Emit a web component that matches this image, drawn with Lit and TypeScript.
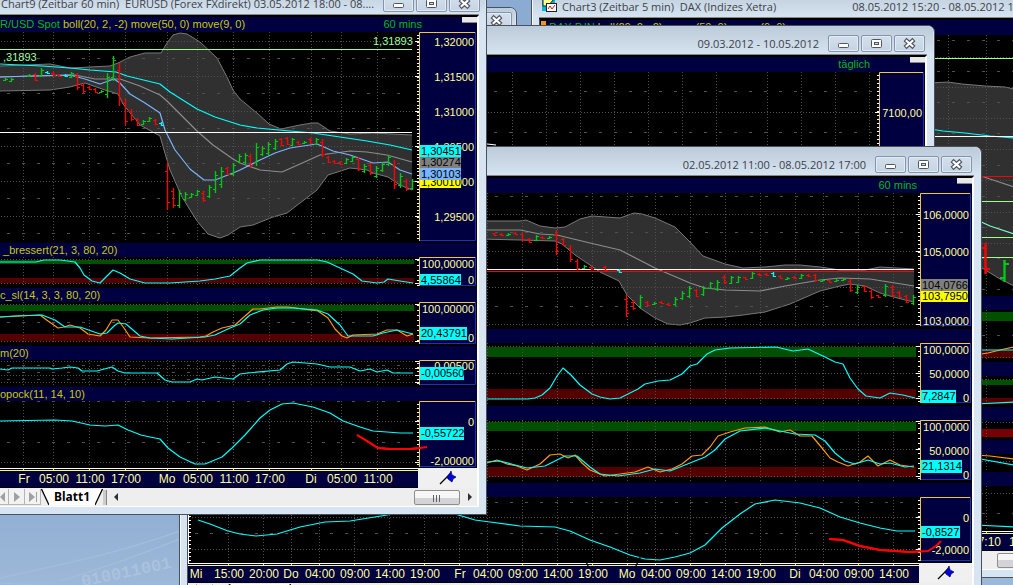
import { LitElement, html, svg, css } from "lit";
import { customElement, property } from "lit/decorators.js";

type Colour = string;
interface Line { pts: string; colour: Colour; width?: number; }
interface Label { text: string; y: number; }
interface Tag { text: string; y: number; h: number; bg: Colour; w: number; }
interface Pane {
  title?: { text: string; colour: Colour }[];
  marker?: boolean;
  note?: string;
  top: number;
  height: number;
  boxHeight: number;
  dotted: number[];
  dashed: number[];
  tick: number;
  bands?: [number, number, Colour][];
  cloud?: { upper: string; lower: string };
  lines: Line[];
  levels?: [number, Colour][];
  bars?: string;
  barWidth?: number;
  labels: Label[];
  tags?: Tag[];
  notes?: { text: string; x: number; y: number }[];
}
interface Frame {
  x0: number; x1: number; axis: number; axisEnd: number; plotEnd: number;
  grid: number[]; leftTicks?: boolean;
}

const GREEN = "#00b818";
const YELLOW = "#c8c80a";
const CYAN = "#00ffff";
const ORANGE = "#ff9a0a";
const BAND_GREEN = "#005000";
const BAND_RED = "#540000";
const BAR_COLOURS: Record<string, string> = { g: "#00c814", r: "#ff0000", c: "#00ffff" };

/** "x,high,low,kind" entries become open/close bars. */
const drawBars = (list: string, width = 1) =>
  list.trim().split(/\s+/).map((entry) => {
    const [xs, hs, ls, kind] = entry.split(",");
    const x = +xs, hi = +hs, lo = +ls;
    const inset = Math.round((lo - hi) / 6);
    const open = kind === "g" ? lo - inset : hi + inset;
    const close = kind === "g" ? hi + inset : lo - inset;
    const arm = width * 2 + 1;
    return svg`<path d="M${x + 0.5} ${hi}V${lo}" stroke=${BAR_COLOURS[kind]} stroke-width=${width + 0.4}></path>
      <path d="M${x - arm + 1} ${open}H${x}M${x} ${close}H${x + arm}" stroke=${BAR_COLOURS[kind]} stroke-width=${width} shape-rendering="crispEdges"></path>`;
  });

@customElement("chart-pane")
export class ChartPane extends LitElement {
  @property({ attribute: false }) pane!: Pane;
  @property({ attribute: false }) frame!: Frame;

  static styles = css`
    :host { display: block; background: #000; }
    .head {
      display: flex; justify-content: space-between; height: 14px;
      background: #000040; font: 11px/14px "Liberation Sans", Arial, sans-serif; white-space: pre;
      overflow: hidden;
    }
    .head.first { height: 15px; line-height: 15px; }
    .title { display: flex; }
    .marker { width: 5px; height: 6px; margin: 1px 3px 0 1px; background: #ff9600; }
    .note { display: flex; gap: 40px; color: #00b818; }
    .grip { width: 15px; height: 5px; background: #e8e8e8; border-bottom: 1px solid #888; }
    svg { display: block; }
    text { font: 12px "Liberation Sans", Arial, sans-serif; dominant-baseline: central; }
    .narrow { font-size: 11px; }
  `;

  render() {
    const p = this.pane, f = this.frame;
    const bottom = p.top + p.height;
    const boxEnd = p.top + p.boxHeight;
    const minor: number[] = [];
    for (let y = p.top + 3; y < boxEnd; y += p.tick) minor.push(y);
    return html`
      <div class="head ${p.note ? "first" : ""}">
        <span class="title">${p.marker ? html`<span class="marker"></span>` : null}${(p.title ?? []).map((t) => html`<span style="color:${t.colour}">${t.text}</span>`)}</span>
        ${p.note ? html`<span class="note">${p.note}<span class="grip"></span></span>` : null}
      </div>
      <svg width=${f.x1 - f.x0} height=${p.height} viewBox="${f.x0} ${p.top} ${f.x1 - f.x0} ${p.height}" role="img" aria-label="Kursverlauf">
        ${(p.bands ?? []).map(([y, h, c]) => svg`<rect x=${f.x0} y=${y} width=${f.plotEnd + 2 - f.x0} height=${h} fill=${c}></rect>`)}
        ${p.cloud ? svg`
          <polygon points="${p.cloud.upper} ${p.cloud.lower.trim().split(/\s+/).reverse().join(" ")}" fill="#303030"></polygon>
          <polyline points=${p.cloud.upper} fill="none" stroke="#787878"></polyline>
          <polyline points=${p.cloud.lower} fill="none" stroke="#787878"></polyline>` : null}
        <g stroke="#505050" shape-rendering="crispEdges">
          ${f.grid.map((x) => svg`<line x1=${x + 0.5} x2=${x + 0.5} y1=${p.top} y2=${bottom - 2} stroke-dasharray="1 2"></line>`)}
          ${p.dotted.map((y) => svg`<line x1=${f.x0 + 1} x2=${f.plotEnd + 4} y1=${y + 0.5} y2=${y + 0.5} stroke-dasharray="1 2"></line>`)}
          ${p.dashed.map((y) => svg`<line x1=${f.x0 + 7} x2=${f.plotEnd} y1=${y + 0.5} y2=${y + 0.5} stroke-dasharray="3 12"></line>`)}
        </g>
        ${p.lines.map((l) => svg`<polyline points=${l.pts} fill="none" stroke=${l.colour} stroke-width=${l.width ?? 1.2} stroke-linejoin="round"></polyline>`)}
        ${(p.levels ?? []).map(([y, c]) => svg`<rect x=${f.x0} y=${y} width=${f.plotEnd - f.x0} height="1" fill=${c}></rect>`)}
        ${p.bars ? drawBars(p.bars, p.barWidth) : null}
        ${(p.notes ?? []).map((n) => svg`<text class="narrow" x=${n.x} y=${n.y} fill="#a0ffa0">${n.text}</text>`)}
        <g stroke="#fff" shape-rendering="crispEdges">
          ${minor.map((y) => svg`<line x1=${f.axis - 2} x2=${f.axis} y1=${y} y2=${y}></line>`)}
          ${p.dotted.map((y) => svg`<line x1=${f.axis - 4} x2=${f.axis} y1=${y + 0.5} y2=${y + 0.5}></line>`)}
          ${f.leftTicks ? svg`<line x1=${f.x0 + 0.5} x2=${f.x0 + 0.5} y1=${p.top} y2=${bottom}></line>
            ${minor.map((y) => svg`<line x1=${f.x0} x2=${f.x0 + 3} y1=${y} y2=${y}></line>`)}` : null}
        </g>
        <rect x=${f.axis} y=${p.top} width=${f.axisEnd - f.axis} height=${p.boxHeight} fill="#000040"></rect>
        <path d="M${f.axis + 0.5} ${boxEnd}V${p.top + 0.5}H${f.axisEnd}" fill="none" stroke="#f0c83c"></path>
        <path d="M${f.axis + 1} ${boxEnd - 0.5}H${f.axisEnd - 0.5}V${p.top}" fill="none" stroke="#1432c8"></path>
        ${p.labels.map((l) => svg`<text class="narrow" x=${f.axisEnd - 2} y=${l.y} text-anchor="end" fill="#ffff96">${l.text}</text>`)}
        ${(p.tags ?? []).map((t) => svg`<rect x=${f.axis + 1} y=${t.y} width=${t.w} height=${t.h} fill=${t.bg}></rect>
          <text class="narrow" x=${f.axis + 2} y=${t.y + 6} fill="#000">${t.text}</text>`)}
        ${p.lines.filter((l) => l.width === 2).map((l) => svg`<polyline points=${l.pts} fill="none" stroke=${l.colour} stroke-width="2"></polyline>`)}
      </svg>`;
  }
}

const frameA: Frame = { x0: 0, x1: 477, axis: 419, axisEnd: 476, plotEnd: 412, grid: [23, 53, 89, 125, 167, 197, 233, 269, 311, 341, 377] };
const frameB: Frame = { x0: 487, x1: 925, axis: 879, axisEnd: 924, plotEnd: 874, grid: [512, 546, 580, 614, 648, 682, 716, 767, 801, 835, 869] };
const frameC: Frame = { x0: 188, x1: 972, axis: 920, axisEnd: 971, plotEnd: 914, leftTicks: true, grid: [228, 263, 291, 319, 354, 389, 424, 459, 487, 522, 557, 592, 627, 655, 690, 725, 760, 795, 823, 858, 893] };
const frameD: Frame = { x0: 540, x1: 1060, axis: 1040, axisEnd: 1059, plotEnd: 1030, grid: [948, 986, 1024] };

const panesA: Pane[] = [
  {
    title: [{ text: "R/USD Spot ", colour: GREEN }, { text: "boll(20, 2, -2) move(50, 0) move(9, 0)", colour: YELLOW }],
    note: "60 mins", top: 32, height: 211, boxHeight: 209, tick: 3.5,
    dotted: [41, 76, 111, 146, 181, 216], dashed: [58, 93, 128, 163, 198, 233],
    cloud: {
      upper: "0,66 50,64 70,68 110,66 118,63 130,57 145,53 161,53 167,43 173,35 180,33 187,34 200,42 217,58 227,77 233,90 240,99 257,113 269,124 281,129 300,125 312,123 318,123 330,131 350,134 373,133 412,135",
      lower: "0,91 50,90 70,87 85,83 105,90 118,94 123,104 140,125 160,136 164,150 170,170 182,197 197,221 208,234 220,238 228,235 240,227 253,225 273,217 287,213 300,203 317,190 328,175 350,168 367,170 373,173 388,177 400,185 412,190",
    },
    lines: [
      { colour: "#8c8c8c", pts: "0,77 40,76 75,75 95,79 120,79 140,86 160,95 167,101 197,131 213,145 233,159 240,163 260,170 282,172 300,164 320,155 350,151 367,152 387,155 412,162" },
      { colour: "#78b4ff", pts: "0,77 30,76 70,75 85,79 100,84 114,79 120,83 130,94 145,103 160,113 165,130 175,150 190,169 204,180 215,180 233,173 240,170 260,160 275,153 290,148 303,146 317,144 333,151 350,155 373,163 388,162 400,170 412,174" },
      { colour: CYAN, pts: "0,64 42,66 70,68 90,70 116,72 127,76 160,84 170,92 197,109 215,117 240,125 257,128 290,131 313,133 340,137 367,141 390,145 412,150" },
    ],
    levels: [[49, "#a0ff8c"], [132, "#ffffff"]],
    bars: `5,78,81,g 11,78,82,g 29,74,77,g 35,73,81,r 41,68,77,g 47,71,74,c 53,72,76,r 59,74,77,r 65,74,77,c 71,72,78,g 77,73,90,r 83,83,93,r 89,86,90,r 95,88,93,r 101,90,93,g 107,73,98,g 113,56,81,g 119,63,106,r 125,99,125,r 131,109,121,r 137,118,126,r 143,120,125,g 149,117,122,g 155,119,125,r 161,122,126,c
      167,163,210,r 173,188,208,r 179,190,208,g 185,192,201,g 191,193,198,g 197,190,196,g 203,191,202,r 209,185,198,g 215,171,193,g 221,167,188,g 227,167,175,r 233,163,176,g 239,154,163,g 245,153,164,g 250,154,167,r 256,143,166,g 262,146,156,g 268,142,155,g 275,139,150,g 281,138,146,r 287,137,145,r 292,138,146,g 298,141,145,r 304,141,144,g 310,138,144,r 316,138,145,g 322,139,157,r 328,156,163,r 334,160,164,r 340,161,165,r 346,158,164,g 352,156,162,g 358,157,171,r 364,164,173,g 370,163,175,r 376,166,178,g 382,162,172,g 388,155,166,g 394,160,189,r 400,173,188,g 406,179,191,r 412,179,190,g`,
    labels: [{ text: "1,32000", y: 42 }, { text: "1,31500", y: 77 }, { text: "1,31000", y: 112 }, { text: "1,30500", y: 147 }, { text: "1,30000", y: 182 }, { text: "1,29500", y: 217 }],
    tags: [
      { text: "1,30010", y: 176, h: 12, bg: "#ffff00", w: 41 },
      { text: "1,30103", y: 168, h: 12, bg: "#78b4ff", w: 41 },
      { text: "1,30274", y: 156, h: 12, bg: "#808080", w: 41 },
      { text: "1,30451", y: 145, h: 12, bg: CYAN, w: 41 },
    ],
    notes: [{ text: ",31893", x: 3, y: 57 }, { text: "1,31893", x: 373, y: 41 }],
  },
  {
    title: [{ text: " _bressert(21, 3, 80, 20)", colour: YELLOW }], top: 257, height: 31, boxHeight: 29, tick: 5,
    dotted: [259, 283], dashed: [], bands: [[260, 4, BAND_GREEN], [278, 5, BAND_RED]],
    lines: [{ colour: CYAN, pts: "0,262 36,262 44,260 60,260 75,262 80,268 84,275 92,281 100,283 105,278 113,270 120,273 130,279 145,283 170,283 200,281 215,279 230,276 240,268 247,263 260,260 318,260 327,262 340,268 353,274 362,281 377,283 384,282 388,279 400,281 413,283" }],
    labels: [{ text: "100,00000", y: 264 }, { text: "0", y: 280 }],
    tags: [{ text: "4,55864", y: 274, h: 11, bg: CYAN, w: 41 }],
  },
  {
    title: [{ text: "c_sl(14, 3, 3, 80, 20)", colour: YELLOW }], top: 302, height: 44, boxHeight: 42, tick: 5,
    dotted: [304, 341], dashed: [322], bands: [[305, 6, BAND_GREEN], [334, 7, BAND_RED]],
    lines: [
      { colour: ORANGE, pts: "0,317 40,315 48,321 58,328 64,327 70,325 80,328 88,334 100,336 106,330 112,320 118,320 124,328 130,337 150,338 200,337 206,336 213,332 222,328 235,325 245,316 253,309 260,309 277,307 288,307 303,309 318,311 328,318 335,329 342,336 347,338 353,335 377,334 387,330 397,330 407,336 413,334" },
      { colour: CYAN, pts: "0,317 14,316 42,315 55,320 65,327 80,327 100,334 107,333 114,326 118,323 126,324 140,336 150,338 172,339 205,337 215,335 230,328 240,324 250,315 263,310 277,308 293,308 317,310 328,314 340,325 348,336 373,336 383,333 397,330 413,334" },
    ],
    labels: [{ text: "100,00000", y: 309 }, { text: "0", y: 338 }],
    tags: [{ text: "20,43791", y: 327, h: 13, bg: CYAN, w: 47 }],
  },
  {
    title: [{ text: "m(20)", colour: YELLOW }], top: 360, height: 27, boxHeight: 25, tick: 4,
    dotted: [361, 368, 375, 382], dashed: [365, 372, 379],
    lines: [{ colour: CYAN, pts: "0,369 8,370 12,368 50,368 52,369 62,368 70,367 78,368 82,371 97,371 108,368 112,367 118,371 125,373 157,373 165,380 172,382 190,382 197,379 202,380 215,377 233,379 240,374 248,373 280,370 287,364 293,362 317,364 330,367 350,367 360,371 370,369 377,372 387,370 393,373 413,373" }],
    labels: [{ text: "0,00500", y: 366 }],
    tags: [{ text: "-0,00560", y: 367, h: 13, bg: CYAN, w: 44 }],
  },
  {
    title: [{ text: "opock(11, 14, 10)", colour: YELLOW }], top: 401, height: 67, boxHeight: 66, tick: 4,
    dotted: [421, 462], dashed: [401, 442],
    lines: [
      { colour: CYAN, pts: "0,421 55,420 72,421 90,425 105,426 118,425 128,430 141,435 150,437 160,439 168,448 180,457 195,464 205,464 222,457 232,448 245,435 260,418 270,410 282,404 293,403 313,407 330,413 343,421 360,427 373,431 387,432 400,433 413,433" },
      { colour: "#ff0000", width: 2, pts: "357,435 367,441 378,448 390,449 410,449 420,448 427,447" },
    ],
    labels: [{ text: "0", y: 422 }, { text: "-2,00000", y: 461 }],
    tags: [{ text: "-0,55722", y: 427, h: 13, bg: CYAN, w: 44 }],
  },
];

const panesB: Pane[] = [{
  note: "täglich", top: 72, height: 400, boxHeight: 398, tick: 4,
  dotted: [112, 153], dashed: [91, 132], lines: [{ colour: "#ffffff", pts: "487,144 496,145" }],
  labels: [{ text: "7100,00", y: 113 }],
}];

const panesC: Pane[] = [
  {
    note: "60 mins", top: 193, height: 136, boxHeight: 133, tick: 4,
    dotted: [214, 251, 287, 324], dashed: [196, 232, 269, 306],
    cloud: {
      upper: "480,221 520,221 526,220 540,226 555,228 565,227 580,219 592,216 620,218 634,213 642,214 655,218 675,227 690,242 703,256 725,264 743,268 765,267 785,265 800,265 820,267 840,270 865,270 880,267 914,269",
      lower: "480,239 520,240 555,241 562,244 575,255 590,265 600,272 619,281 627,295 640,308 655,318 668,324 680,325 690,323 705,318 725,317 743,315 765,312 790,304 820,291 840,286 850,284 865,286 880,293 890,296 905,300 914,302",
    },
    lines: [{ colour: "#8c8c8c", pts: "480,230 520,230 540,234 557,235 590,243 620,250 655,268 690,283 705,288 725,290 760,291 785,286 820,280 840,278 870,279 914,286" }],
    levels: [[269, "#ffffff"], [271, "#ff0000"]],
    bars: `494,233,235,r 501,233,236,r 508,233,236,g 515,232,235,r 522,233,241,r 529,238,243,r 536,235,241,g 542,236,239,r 549,236,239,g 556,230,255,r 563,238,246,r 570,245,262,r 577,259,270,r 584,265,269,g 591,266,270,r 605,266,271,r 619,269,273,c
      626,295,317,r 633,300,310,r 640,295,308,g 647,301,306,r 654,302,305,g 661,301,304,r 668,303,306,r 675,297,306,g 682,291,300,g 689,286,298,g 696,289,297,r 703,286,296,g 710,282,289,g 717,280,291,g 724,275,284,r 731,276,284,g 738,276,283,g 745,277,279,r 752,272,279,g 759,273,276,r 766,273,276,r 773,272,277,c 780,275,279,r 787,277,280,g 794,276,279,r 801,274,279,g 808,274,277,r 815,274,281,r 822,279,282,g 829,280,282,r 836,279,282,g 843,278,281,g 850,279,292,r 857,285,294,g 864,285,292,r 871,289,299,r 878,295,297,r 885,284,297,g 892,285,297,r 899,291,298,r 906,295,303,r 913,295,305,g`,
    labels: [{ text: "106,0000", y: 215 }, { text: "105,0000", y: 252 }, { text: "103,0000", y: 321 }],
    tags: [
      { text: "103,7950", y: 290, h: 12, bg: "#ffff00", w: 47 },
      { text: "104,0766", y: 279, h: 12, bg: "#808080", w: 47 },
    ],
  },
  {
    top: 343, height: 63, boxHeight: 60, tick: 5, dotted: [346, 373, 398], dashed: [],
    bands: [[347, 10, BAND_GREEN], [389, 10, BAND_RED]],
    lines: [{ colour: CYAN, pts: "480,399 528,399 535,398 542,395 550,388 557,376 563,368 571,375 580,385 592,394 600,397 610,399 620,398 628,394 638,389 645,384 658,381 670,380 682,374 690,366 697,364 707,354 715,350 730,348 776,347 793,351 808,349 825,357 835,362 843,364 850,378 858,389 866,396 880,398 890,393 903,395 915,398" }],
    labels: [{ text: "100,0000", y: 350 }, { text: "50,0000", y: 374 }, { text: "0", y: 398 }],
    tags: [{ text: "7,2847", y: 390, h: 13, bg: CYAN, w: 35 }],
  },
  {
    top: 420, height: 63, boxHeight: 60, tick: 5, dotted: [421, 449, 476], dashed: [],
    bands: [[422, 9, BAND_GREEN], [467, 10, BAND_RED]],
    lines: [
      { colour: ORANGE, pts: "487,463 497,460 507,464 517,466 527,470 540,464 550,455 560,454 568,458 575,455 582,463 590,470 605,476 620,474 635,472 648,467 660,472 672,469 682,464 692,456 702,455 710,447 718,436 730,432 745,428 765,427 780,432 790,430 800,436 812,436 822,448 830,458 838,462 848,466 860,462 868,456 878,466 890,460 900,465 914,467" },
      { colour: CYAN, pts: "487,462 500,461 515,465 527,468 545,466 555,461 565,456 577,456 590,467 600,474 618,476 640,473 655,469 670,471 690,463 705,457 715,450 725,439 740,431 765,428 780,431 795,434 815,435 825,441 835,453 845,461 855,464 868,460 880,464 890,463 905,467 914,466" },
    ],
    labels: [{ text: "100,0000", y: 427 }, { text: "50,0000", y: 451 }, { text: "0", y: 475 }],
    tags: [{ text: "21,1314", y: 460, h: 13, bg: CYAN, w: 41 }],
  },
  {
    top: 497, height: 66, boxHeight: 64, tick: 4, dotted: [517, 549], dashed: [533, 502],
    lines: [
      { colour: CYAN, pts: "198,520 210,524 228,531 240,534 256,536 277,534 300,527 325,522 350,521 387,515 420,508 455,514 475,520 490,522 520,526 555,527 570,531 590,540 610,547 630,555 645,559 660,560 675,557 690,553 705,545 722,528 740,514 755,504 775,500 800,503 820,508 840,517 860,523 880,528 897,531 915,531" },
      { colour: "#ff0000", width: 2, pts: "829,539 843,540 860,546 880,550 910,552 928,551 936,546 941,541" },
    ],
    labels: [{ text: "0", y: 518 }, { text: "-2,0000", y: 550 }],
    tags: [{ text: "-0,8527", y: 526, h: 12, bg: CYAN, w: 39 }],
  },
];

const panesD: Pane[] = [
  {
    title: [{ text: "DAX P.IN ", colour: GREEN }, { text: "boll(20, 2, -2)  move(50, 0)  move(9, 0)", colour: YELLOW }],
    marker: true, note: " ",
    top: 35, height: 261, boxHeight: 259, tick: 4,
    dotted: [57, 87, 118, 149, 180, 212, 243], dashed: [40, 71, 102, 133, 165, 196, 227, 258, 289],
    cloud: { upper: "930,83 948,82 962,84 985,86 1005,87 1014,89", lower: "930,240 960,255 982,268 1000,279 1014,286" },
    lines: [
      { colour: "#8c8c8c", pts: "975,174 990,179 1014,187" },
      { colour: CYAN, pts: "930,129 943,131 965,133 990,136 1014,138" },
      { colour: "#78ffc8", pts: "975,219 990,226 1014,234" },
    ],
    levels: [[58, "#a0ff8c"], [136, "#ffffff"], [176, "#ff0000"], [201, "#a0ff8c"], [237, "#a0ff8c"], [257, "#a0ff8c"]],
    bars: "985,243,274,r 1004,260,282,g", barWidth: 2, labels: [],
  },
  { top: 310, height: 52, boxHeight: 50, tick: 4, dotted: [357], dashed: [335], bands: [[312, 9, BAND_GREEN], [350, 8, BAND_RED]],
    lines: [{ colour: ORANGE, pts: "975,355 988,353 1000,350 1014,347" }, { colour: CYAN, pts: "975,350 1014,350" }], labels: [] },
  { top: 376, height: 31, boxHeight: 29, tick: 4, dotted: [379], dashed: [], bands: [[380, 5, BAND_GREEN], [398, 6, BAND_RED]],
    lines: [{ colour: CYAN, pts: "975,404 1014,402" }], labels: [] },
  { top: 421, height: 19, boxHeight: 17, tick: 4, dotted: [422], dashed: [], bands: [[429, 8, "#780000"]], lines: [], labels: [] },
  { top: 454, height: 18, boxHeight: 16, tick: 4, dotted: [461], dashed: [],
    lines: [{ colour: ORANGE, pts: "975,455 990,456 1014,459" }, { colour: CYAN, pts: "975,458 1014,465" }], labels: [] },
  { top: 486, height: 45, boxHeight: 44, tick: 4, dotted: [493], dashed: [513],
    lines: [{ colour: CYAN, pts: "975,525 1014,527" }], labels: [] },
];

const timesA: [string, number][] = [["Fr", 24], ["05:00", 54], ["11:00", 90], ["17:00", 126], ["Mo", 167], ["05:00", 198], ["11:00", 234], ["17:00", 270], ["Di", 311], ["05:00", 342], ["11:00", 378]];
const timesC: [string, number][] = [["Mi", 196], ["15:00", 229], ["20:00", 264], ["Do", 291], ["04:00", 320], ["09:00", 355], ["14:00", 390], ["19:00", 425], ["Fr", 460], ["04:00", 488], ["09:00", 523], ["14:00", 558], ["19:00", 593], ["Mo", 627], ["04:00", 656], ["09:00", 691], ["14:00", 726], ["19:00", 761], ["Di", 795], ["04:00", 824], ["09:00", 859], ["14:00", 894]];
const timesD: [string, number][] = [["17:10", 986], ["17:35", 1024]];

const minIcon = svg`<rect x="3.5" y="7.5" width="10" height="4" rx="1" fill="#fff" stroke="#505562"></rect>`;
const maxIcon = svg`<rect x="3.5" y="3.500" width="10" height="8" rx="1" fill="#fff" stroke="#505562"></rect><rect x="6.500" y="6.500" width="4" height="2" fill="#cfdbe8" stroke="#505562"></rect>`;
const closeIcon = svg`<path d="M4 3.500L13 11.500M13 3.500L4 11.500" stroke="#505562" stroke-width="4.400"></path><path d="M4.800 4.200L12.200 10.800M12.200 4.200L4.800 10.800" stroke="#fff" stroke-width="2.200"></path>`;

@customElement("app-root")
export class AppRoot extends LitElement {
  static styles = css`
    :host { display: block; font-family: "Liberation Sans", Arial, sans-serif; }
    .desktop {
      position: relative; width: 100%; height: 100vh; overflow: hidden;
      background: linear-gradient(#8cabd2, #8faed3 85%, #9db8d8);
    }
    .wallpaper { position: absolute; left: 0; bottom: 0; }
    .wallpaper text { font: bold 17px "Liberation Mono", monospace; fill: #b6cae2; }
    .window {
      position: absolute; box-sizing: border-box; padding: 0 7px 7px;
      background: #d7e4f2; border: 1px solid #4c5058; border-radius: 7px 7px 0 0;
      box-shadow: inset 1px 1px 0 #f4f8fc;
    }
    .bar {
      display: flex; align-items: center; gap: 9px; box-sizing: border-box; height: 29px;
      margin: 0 -6px; padding: 6px 8px 0; border-radius: 6px 6px 0 0;
      background: linear-gradient(#bccbd9, #d7e4f2);
    }
    .caption {
      flex: 1; display: flex; justify-content: flex-end; gap: 76px; white-space: pre;
      font: 11px/17px "Open Sans", "Noto Sans", sans-serif; color: #3c4248;
    }
    .caption.lead { justify-content: flex-start; }
    .buttons { display: flex; gap: 2px; }
    .buttons button {
      display: grid; place-items: center; width: 31px; height: 17px; padding: 0;
      border: 1px solid #8494ae; border-radius: 2px;
      background: linear-gradient(#d3dfeb, #c6d4e2); box-shadow: inset 0 0 0 1px #e2ebf4;
    }
    .body { background: #000; border-top: 2px solid #000; border-left: 1px solid #4c5058; border-right: 2px solid #fff; box-shadow: 0 -1px 0 #888; }
    .times { display: flex; background: #f0f0f0; }
    .times svg { display: block; }
    .times text { font-size: 12px; fill: #ffff96; text-anchor: middle; dominant-baseline: central; }
    .pin { display: grid; place-items: center; flex: 1; }
    .tabs { display: flex; align-items: center; height: 18px; background: #eeeeee; border-bottom: 1px solid #fff; }
    .nav { display: flex; }
    .nav button { width: 16px; height: 16px; padding: 0; border: 1px solid #b4b4b4; border-width: 0 1px 1px 0; background: #f2f2f2; }
    .nav .cut { width: 9px; }
    .nav svg, .arrow svg { display: block; margin: auto; }
    .edge { margin-right: -8px; z-index: 1; }
    .edge.right { margin: 0 0 0 -8px; }
    .sheet {
      width: 62px; height: 17px; padding: 0; border: 0; color: #000;
      background: #fff; clip-path: polygon(0 0, 100% 0, 89% 100%, 12% 100%);
      font: bold 12px/14px "Noto Sans", sans-serif;
    }
    .split { width: 3px; height: 15px; border-right: 1px solid #888; background: #ccc; }
    .scroll { flex: 1; display: flex; justify-content: space-between; align-items: center; }
    .arrow { width: 17px; height: 15px; padding: 0; border: 0; background: none; }
    .end { display: flex; }
    .thumb { width: 46px; height: 15px; padding: 0; border: 1px solid #8e8e8e; border-radius: 2px; background: linear-gradient(#f6f6f6 50%, #d4d4d8 50%); }
    .mini .bar { padding: 2px 3px 0; height: 22px; }
    .logo { display: block; margin-right: -71px; }
  `;

  private controls(only = false) {
    const b = (label: string, icon: unknown) => html`<button aria-label=${label}><svg width="17" height="15">${icon}</svg></button>`;
    return html`<span class="buttons">${only ? null : [b("Minimieren", minIcon), b("Maximieren", maxIcon)]}${b("Schließen", closeIcon)}</span>`;
  }

  private times(f: Frame, top: number, list: [string, number][]) {
    const w = f.axis - f.x0 - 1;
    return html`<div class="times">
      <svg width=${w} height="20" viewBox="${f.x0} ${top} ${w} 20">
        <rect x=${f.x0} y=${top} width=${w} height="20" fill="#000"></rect>
        <rect x=${f.x0} y=${top + 3} width=${w} height="16" fill="#000040"></rect>
        <rect x=${f.x0} y=${top} width=${w} height="1" fill="#fff"></rect>
        <rect x=${f.x0} y=${top + 2} width=${w} height="1" fill="#ffff64"></rect>
        ${f.grid.map((x) => svg`<rect x=${x} y=${top} width="1" height="2" fill="#ffff64"></rect>`)}
        ${list.map(([t, x]) => svg`<text x=${x} y=${top + 11}>${t}</text>`)}
      </svg>
      <span class="pin"><svg width="20" height="16"><path d="M2 14L12 4" stroke="#000" stroke-width="1.300"></path><path d="M9 7L12 3L13 1L14 5L18 7L15 9L14 12L10 9Z" fill="#0000dc" stroke="#000050" stroke-width=".7"></path></svg></span>
    </div>`;
  }

  private tabs() {
    const arrow = (d: string, c = "#a0a0a0") => html`<svg width="12" height="12"><path d=${d} fill=${c}></path></svg>`;
    return html`<div class="tabs">
      <span class="nav">
        <button class="cut" aria-label="Zurück">${arrow("M0 6L5 1V11Z")}</button>
        <button aria-label="Weiter">${arrow("M3 1L9 6L3 11Z")}</button>
        <button aria-label="Ende">${arrow("M2 1L8 6L2 11ZM9 1H10V11H9Z")}</button>
      </span>
      <svg class="edge" width="8" height="17"><path d="M0.500 0L8 16" stroke="#000" stroke-width="1.300"></path></svg>
      <button class="sheet">Blatt1</button>
      <svg class="edge right" width="8" height="17"><path d="M7.500 0L0 16" stroke="#000" stroke-width="1.300"></path></svg>
      <span class="split"></span>
      <span class="scroll">
        <button class="arrow" aria-label="Nach links">${arrow("M4 6L8 2V10Z", "#303030")}</button>
        <span class="end">
          <button class="thumb" aria-label="Bildlaufleiste"><svg width="12" height="9"><path d="M2.500 1V8M5.500 1V8M8.500 1V8" stroke="#606060"></path></svg></button>
          <button class="arrow" aria-label="Nach rechts">${arrow("M5 2L9 6L5 10Z", "#303030")}</button>
        </span>
      </span>
    </div>`;
  }

  private window(left: number, top: number, width: number, caption: unknown, f: Frame, panes: Pane[], footer: unknown, lead = false) {
    return html`<section class="window" style="left:${left}px;top:${top}px;width:${width}px">
      <header class="bar"><span class="caption ${lead ? "lead" : ""}">${caption}</span>${this.controls()}</header>
      <div class="body">
        ${panes.map((p) => html`<chart-pane .pane=${p} .frame=${f}></chart-pane>`)}
        ${footer}
      </div>
    </section>`;
  }

  render() {
    const logo = html`<svg class="logo" width="16" height="16"><rect x="1" y="1" width="13" height="12" fill="#00b4dc"></rect><path d="M2 1H13L7 8H2Z" fill="#ffff8c" stroke="#222"></path><rect x="5.500" y="5.500" width="10" height="8" fill="#fff" stroke="#222"></rect><path d="M7 11L9 8L11 11L14 7" fill="none" stroke="#e01414"></path></svg>`;
    return html`<main class="desktop">
      <svg class="wallpaper" width="180" height="72" aria-hidden="true">
        <path d="M0 65C60 52 120 40 180 18M60 68C100 56 140 42 180 26M0 70L180 80" stroke="#a2bcdb" stroke-width="1.500" fill="none"></path>
        <g transform="rotate(-12 100 70)" opacity=".6"><text x="82" y="70">010011001</text></g>
      </svg>
      <section class="window mini" style="left:437px;top:7px;width:80px">
        <header class="bar"><span class="caption"></span>${this.controls(true)}</header>
      </section>
      ${this.window(531, -12, 539, html`${logo}<span>Chart3 (Zeitbar 5 min)  DAX (Indizes Xetra)</span><span>08.05.2012 15:20 - 08.05.2012 17:35</span>`, frameD, panesD, html`${this.times(frameD, 531, timesD)}${this.tabs()}`, true)}
      ${this.window(478, 25, 457, html`<span>09.03.2012 - 10.05.2012</span>`, frameB, panesB, null)}
      ${this.window(179, 146, 803, html`<span>02.05.2012 11:00 - 08.05.2012 17:00</span>`, frameC, panesC, html`${this.times(frameC, 563, timesC)}${this.tabs()}`)}
      ${this.window(-9, -15, 496, html`<span>Chart9 (Zeitbar 60 min)  EURUSD (Forex FXdirekt) 03.05.2012 18:00 - 08....</span>`, frameA, panesA, html`${this.times(frameA, 468, timesA)}${this.tabs()}`)}
    </main>`;
  }
}
